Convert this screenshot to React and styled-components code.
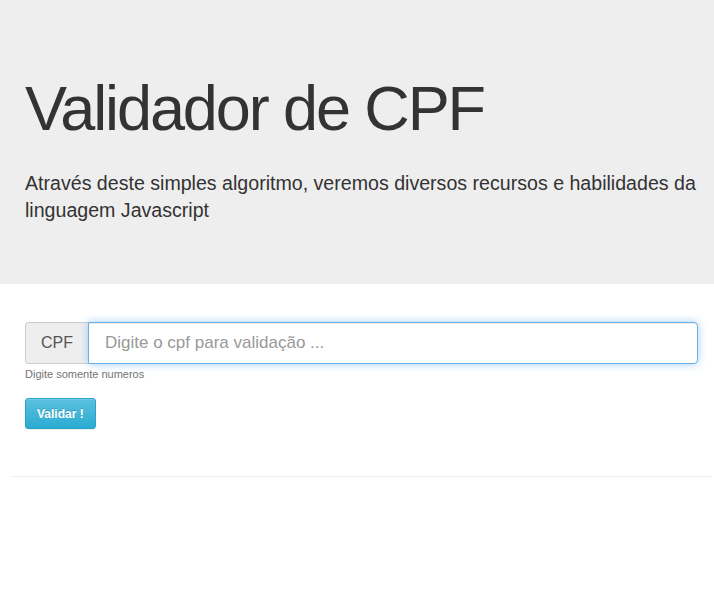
import React from 'react';
import styled, { createGlobalStyle } from 'styled-components';

const GlobalStyle = createGlobalStyle`
  html, body {
    margin: 0;
    padding: 0;
    background: #fff;
  }
  body {
    font-family: 'Liberation Sans', Arial, sans-serif;
    color: #333;
  }
  * {
    box-sizing: border-box;
  }
`;

const Jumbotron = styled.header`
  background: #eee;
  padding: 74px 0 60px;
`;

const Container = styled.div`
  padding: 0 16px 0 25px;
`;

const Title = styled.h1`
  margin: 0;
  font-size: 63px;
  font-weight: 400;
  line-height: 1.1;
  letter-spacing: -2.1px;
  color: #333;
`;

const Lead = styled.p`
  margin: 27px 0 0;
  font-size: 19.6px;
  line-height: 27px;
  color: #333;
`;

const Form = styled.form`
  margin: 38px 0 0;
`;

const InputGroup = styled.div`
  display: flex;
  height: 42px;
`;

const Addon = styled.span`
  display: flex;
  align-items: center;
  padding: 0 15px;
  background: #eee;
  border: 1px solid #ccc;
  border-right: 0;
  border-radius: 4px 0 0 4px;
  font-size: 16px;
  color: #555;
`;

const Input = styled.input`
  flex: 1;
  min-width: 0;
  height: 100%;
  padding: 0 16px;
  border: 1px solid #66afe9;
  border-radius: 0 4px 4px 0;
  background: #fff;
  font-family: inherit;
  font-size: 17px;
  color: #555;
  outline: 0;
  box-shadow: inset 0 1px 1px rgba(0, 0, 0, 0.075), 0 0 8px rgba(102, 175, 233, 0.6);

  &::placeholder {
    color: #999;
  }
`;

const HelpText = styled.span`
  display: block;
  margin-top: 3px;
  font-size: 11px;
  line-height: 15px;
  color: #737373;
`;

const Button = styled.button`
  display: block;
  margin-top: 16px;
  height: 31px;
  padding: 0 11px;
  border: 1px solid #28a4c9;
  border-radius: 3px;
  background: linear-gradient(to bottom, #5bc0de 0%, #2aabd2 100%);
  color: #fff;
  font-family: inherit;
  font-size: 12px;
  font-weight: 700;
  text-shadow: 0 -1px 0 rgba(0, 0, 0, 0.2);
  box-shadow: inset 0 1px 0 rgba(255, 255, 255, 0.15), 0 1px 1px rgba(0, 0, 0, 0.075);
  cursor: pointer;
`;

const Divider = styled.hr`
  margin: 47px 2px 0 11px;
  border: 0;
  border-top: 1px solid #eee;
`;

export default function App() {
  return (
    <>
      <GlobalStyle />
      <Jumbotron>
        <Container>
          <Title>Validador de CPF</Title>
          <Lead>
            Através deste simples algoritmo, veremos diversos recursos e habilidades da
            linguagem Javascript
          </Lead>
        </Container>
      </Jumbotron>
      <Container>
        <Form onSubmit={(e) => e.preventDefault()}>
          <InputGroup>
            <Addon>CPF</Addon>
            <Input type="text" placeholder="Digite o cpf para validação ..." />
          </InputGroup>
          <HelpText>Digite somente numeros</HelpText>
          <Button type="submit">Validar !</Button>
        </Form>
      </Container>
      <Divider />
    </>
  );
}
